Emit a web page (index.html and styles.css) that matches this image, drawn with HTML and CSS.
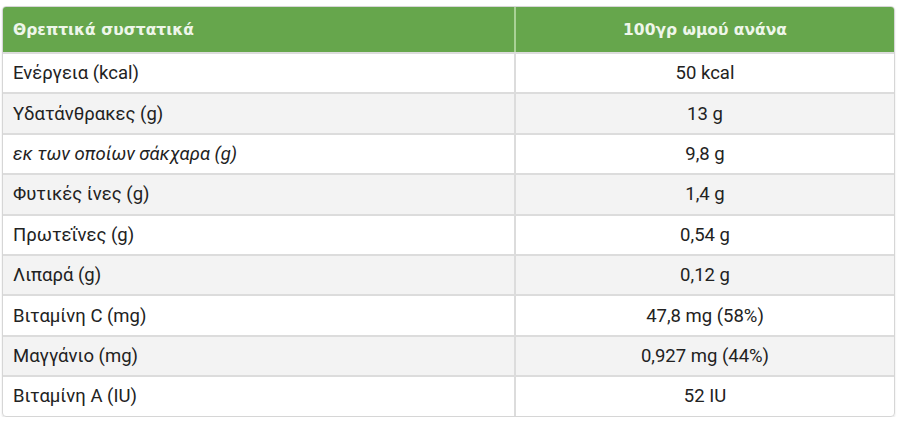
FILE: index.html
```html
<!DOCTYPE html>
<html lang="el">
<head>
<meta charset="utf-8">
<link rel="stylesheet" href="styles.css">
</head>
<body>
<div class="wrap">
<table class="nt">
<thead>
<tr><th class="c1">Θρεπτικά συστατικά</th><th class="c2">100γρ ωμού ανάνα</th></tr>
</thead>
<tbody>
<tr><td class="c1">Ενέργεια (kcal)</td><td class="c2">50 kcal</td></tr>
<tr><td class="c1">Υδατάνθρακες (g)</td><td class="c2">13 g</td></tr>
<tr><td class="c1"><em>εκ των οποίων σάκχαρα (g)</em></td><td class="c2">9,8 g</td></tr>
<tr><td class="c1">Φυτικές ίνες (g)</td><td class="c2">1,4 g</td></tr>
<tr><td class="c1">Πρωτεΐνες (g)</td><td class="c2">0,54 g</td></tr>
<tr><td class="c1">Λιπαρά (g)</td><td class="c2">0,12 g</td></tr>
<tr><td class="c1">Βιταμίνη C (mg)</td><td class="c2">47,8 mg (58%)</td></tr>
<tr><td class="c1">Μαγγάνιο (mg)</td><td class="c2">0,927 mg (44%)</td></tr>
<tr><td class="c1">Βιταμίνη A (IU)</td><td class="c2">52 IU</td></tr>
</tbody>
</table>
</div>
</body>
</html>
```
FILE: styles.css
```css
html, body { margin: 0; padding: 0; background: #fff; }
body { font-family: Roboto, "Liberation Sans", sans-serif; color: #222; }
.wrap { padding: 6px 4px 0 2px; }
.nt {
  width: 893px;
  border-collapse: separate;
  border-spacing: 0;
  border: 1px solid #d6d6d6;
  border-radius: 4px;
  box-shadow: 0 1px 2px rgba(0,0,0,0.12);
  overflow: hidden;
}
.nt th {
  background: #66a64c;
  color: #eef6ea;
  font-family: "DejaVu Sans", Verdana, sans-serif;
  font-weight: 700;
  font-size: 15.5px;
  height: 45px;
  padding: 0 10px;
  box-sizing: border-box;
}
.nt th.c1 { text-align: left; border-right: 2px solid #a9d196; }
.nt td {
  height: 40.4px;
  box-sizing: border-box;
  font-size: 18.5px;
  padding: 0 10px;
  border-top: 2px solid #dcdcdc;
}
.nt td.c1 { width: 513px; text-align: left; border-right: 2px solid #dcdcdc; }
.nt td.c2 { text-align: center; }
.nt tbody tr:nth-child(even) td { background: #f3f3f3; }
.nt em { font-style: italic; }
```
